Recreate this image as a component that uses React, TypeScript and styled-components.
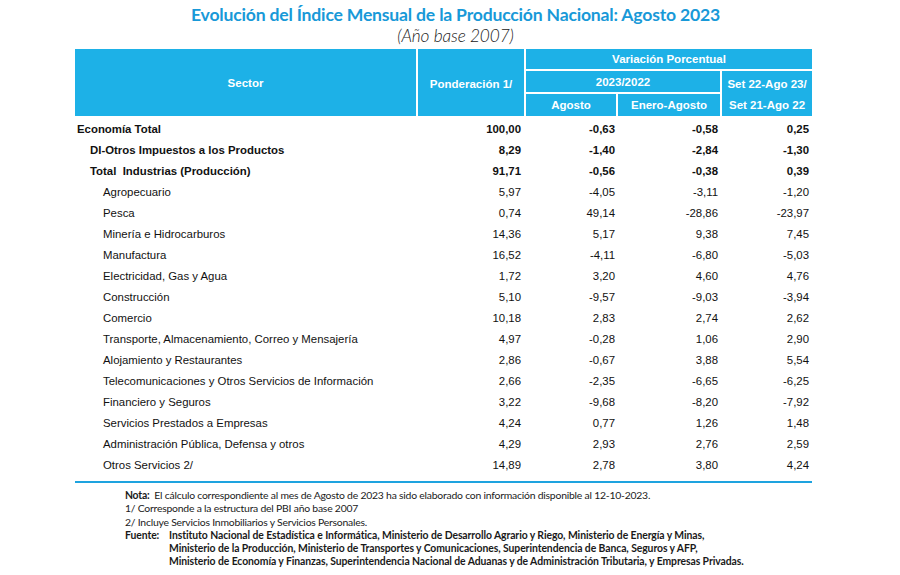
import React from "react";
import styled, { createGlobalStyle } from "styled-components";

const Global = createGlobalStyle`
  html, body { margin: 0; padding: 0; background: #ffffff; }
  body { font-family: "Liberation Sans", Arial, sans-serif; }
`;

const Page = styled.div`
  width: 900px;
  height: 575px;
  overflow: hidden;
  background: #fff;
  display: flex;
  flex-direction: column;
`;

const TitleBlock = styled.div`
  display: flex;
  flex-direction: column;
  align-items: center;
  padding-top: 4px;
  padding-left: 11px;
  height: 45px;
`;

const Title = styled.div`
  font-family: Lato, "Open Sans", sans-serif;
  font-weight: 700;
  font-size: 17.6px;
  line-height: 22px;
  color: #1899d8;
  letter-spacing: -0.2px;
`;

const Subtitle = styled.div`
  font-family: Lato, "Open Sans", sans-serif;
  font-style: italic;
  font-weight: 300;
  font-size: 17.3px;
  line-height: 19px;
  color: #222;
  letter-spacing: -0.1px;
`;

const TableWrap = styled.div`
  margin-left: 75px;
  width: 737px;
  display: flex;
  flex-direction: column;
`;

const cols = "341px 106px 90px 102px 90px";

const Header = styled.div`
  display: grid;
  grid-template-columns: ${cols};
  grid-template-rows: 20px 21px 22px;
  gap: 2px;
  background: #fff;
`;

const HCell = styled.div<{ $col: string; $row: string; $pt?: number }>`
  grid-column: ${(p) => p.$col};
  grid-row: ${(p) => p.$row};
  background: #1db1e7;
  color: #fff;
  font-weight: 700;
  font-size: 11.5px;
  display: flex;
  align-items: center;
  justify-content: center;
  padding-top: ${(p) => p.$pt ?? 0}px;
  box-sizing: border-box;
`;

const SetCell = styled(HCell)`
  flex-direction: column;
  justify-content: space-around;
  padding: 2px 0 1px;
`;

const Body = styled.div`
  padding-top: 2px;
  display: flex;
  flex-direction: column;
`;

const Row = styled.div<{ $bold?: boolean }>`
  display: grid;
  grid-template-columns: ${cols};
  column-gap: 2px;
  height: 21px;
  align-items: center;
  font-size: 11.4px;
  font-weight: ${(p) => (p.$bold ? 700 : 400)};
  color: #111;
`;

const Label = styled.div<{ $indent: number }>`
  padding-left: ${(p) => p.$indent}px;
  white-space: pre;
`;

const Num = styled.div<{ $pr: number }>`
  text-align: right;
  padding-right: ${(p) => p.$pr}px;
`;

const Rule = styled.div`
  margin-top: 6px;
  height: 2px;
  background: #1ea3df;
`;

const Notes = styled.div`
  margin-left: 50px;
  padding-top: 6px;
  font-family: Lato, "Open Sans", sans-serif;
  font-size: 10.4px;
  line-height: 13.3px;
  color: #1a1a1a;
  letter-spacing: -0.22px;
`;

const NoteLine = styled.div`
  white-space: pre;
`;

const B = styled.span`
  font-weight: 700;
`;

const Fuente = styled.div`
  display: grid;
  grid-template-columns: 44px auto;
  font-weight: 700;
  letter-spacing: -0.08px;
`;

type R = { l: string; v: string[]; lvl: number; b?: boolean };

const rows: R[] = [
  { l: "Economía Total", v: ["100,00", "-0,63", "-0,58", "0,25"], lvl: 0, b: true },
  { l: "DI-Otros Impuestos a los Productos", v: ["8,29", "-1,40", "-2,84", "-1,30"], lvl: 1, b: true },
  { l: "Total  Industrias (Producción)", v: ["91,71", "-0,56", "-0,38", "0,39"], lvl: 1, b: true },
  { l: "Agropecuario", v: ["5,97", "-4,05", "-3,11", "-1,20"], lvl: 2 },
  { l: "Pesca", v: ["0,74", "49,14", "-28,86", "-23,97"], lvl: 2 },
  { l: "Minería e Hidrocarburos", v: ["14,36", "5,17", "9,38", "7,45"], lvl: 2 },
  { l: "Manufactura", v: ["16,52", "-4,11", "-6,80", "-5,03"], lvl: 2 },
  { l: "Electricidad, Gas y Agua", v: ["1,72", "3,20", "4,60", "4,76"], lvl: 2 },
  { l: "Construcción", v: ["5,10", "-9,57", "-9,03", "-3,94"], lvl: 2 },
  { l: "Comercio", v: ["10,18", "2,83", "2,74", "2,62"], lvl: 2 },
  { l: "Transporte, Almacenamiento, Correo y Mensajería", v: ["4,97", "-0,28", "1,06", "2,90"], lvl: 2 },
  { l: "Alojamiento y Restaurantes", v: ["2,86", "-0,67", "3,88", "5,54"], lvl: 2 },
  { l: "Telecomunicaciones y Otros Servicios de Información", v: ["2,66", "-2,35", "-6,65", "-6,25"], lvl: 2 },
  { l: "Financiero y Seguros", v: ["3,22", "-9,68", "-8,20", "-7,92"], lvl: 2 },
  { l: "Servicios Prestados a Empresas", v: ["4,24", "0,77", "1,26", "1,48"], lvl: 2 },
  { l: "Administración Pública, Defensa y otros", v: ["4,29", "2,93", "2,76", "2,59"], lvl: 2 },
  { l: "Otros Servicios 2/", v: ["14,89", "2,78", "3,80", "4,24"], lvl: 2 },
];

const indents = [2, 15, 28];
const pads = [3, 1, 2, 3];

export default function App() {
  return (
    <Page>
      <Global />
      <TitleBlock>
        <Title>Evolución del Índice Mensual de la Producción Nacional: Agosto 2023</Title>
        <Subtitle>(Año base 2007)</Subtitle>
      </TitleBlock>
      <TableWrap>
        <Header>
          <HCell $col="1" $row="1 / span 3">Sector</HCell>
          <HCell $col="2" $row="1 / span 3" $pt={3}>Ponderación 1/</HCell>
          <HCell $col="3 / span 3" $row="1">Variación Porcentual</HCell>
          <HCell $col="3 / span 2" $row="2">2023/2022</HCell>
          <SetCell $col="5" $row="2 / span 2">
            <span>Set 22-Ago 23/</span>
            <span>Set 21-Ago 22</span>
          </SetCell>
          <HCell $col="3" $row="3">Agosto</HCell>
          <HCell $col="4" $row="3">Enero-Agosto</HCell>
        </Header>
        <Body>
          {rows.map((r) => (
            <Row key={r.l} $bold={r.b}>
              <Label $indent={indents[r.lvl]}>{r.l}</Label>
              {r.v.map((v, i) => (
                <Num key={i} $pr={pads[i]}>{v}</Num>
              ))}
            </Row>
          ))}
        </Body>
        <Rule />
        <Notes>
          <NoteLine>
            <B>Nota:</B>  El cálculo correspondiente al mes de Agosto de 2023 ha sido elaborado con información disponible al 12-10-2023.
          </NoteLine>
          <NoteLine>1/ Corresponde a la estructura del PBI año base 2007</NoteLine>
          <NoteLine>2/ Incluye Servicios Inmobiliarios y Servicios Personales.</NoteLine>
          <Fuente>
            <span>Fuente:</span>
            <div>
              <NoteLine>Instituto Nacional de Estadística e Informática, Ministerio de Desarrollo Agrario y Riego, Ministerio de Energía y Minas,</NoteLine>
              <NoteLine>Ministerio de la Producción, Ministerio de Transportes y Comunicaciones, Superintendencia de Banca, Seguros y AFP,</NoteLine>
              <NoteLine>Ministerio de Economía y Finanzas, Superintendencia Nacional de Aduanas y de Administración Tributaria, y Empresas Privadas.</NoteLine>
            </div>
          </Fuente>
        </Notes>
      </TableWrap>
    </Page>
  );
}
